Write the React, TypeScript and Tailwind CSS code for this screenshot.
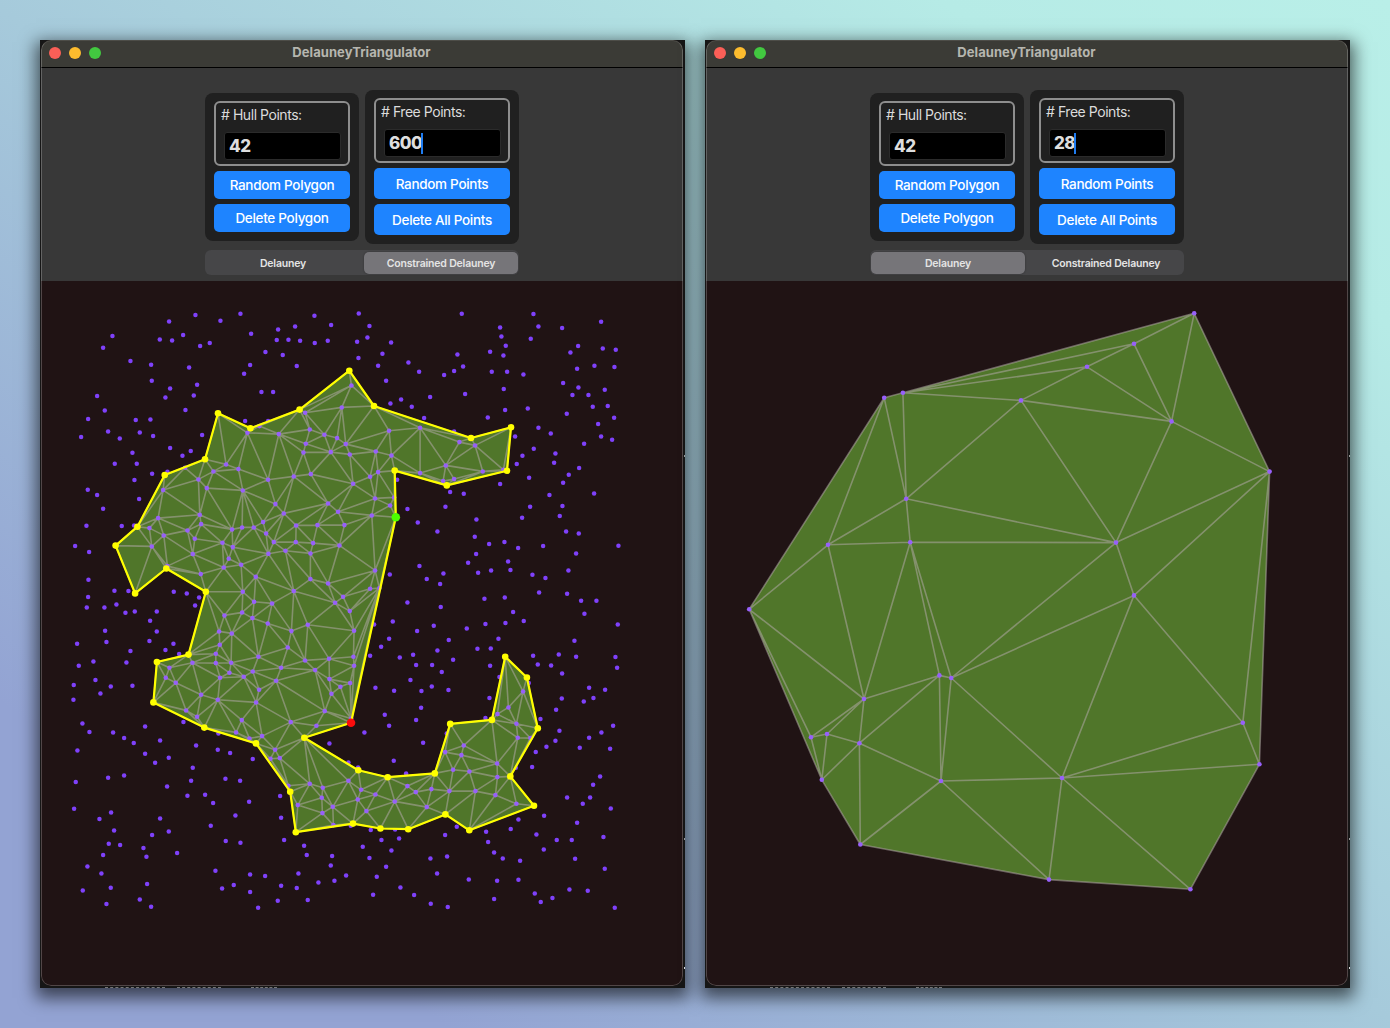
import React from "react";

type Pt = [number, number];

/* Point sets are stored per region: origin in window pixels, offsets in thirds of a pixel. */
const REGIONS: { x: number; y: number; pts: string }[] = [
  {
    x: 60,
    y: 300,
    pts: "406,45 327,64 481,62 541,41 157,108 129,143 299,118 336,121 369,105 449,129 420,138 211,183 273,194 387,202 552,221 275,242 411,254 330,265 316,292 401,286 111,288 134,331 376,330 84,357 227,360 271,358 63,411 144,394 179,415 239,397 279,408 426,405 330,444 392,453 367,467 217,458 164,491 230,491 276,521 322,515 223,540 83,569 111,585 237,597 555,363 562,398 498,493 535,507 460,514 415,538 309,570 440,564 548,571 375,503",
  },
  {
    x: 250,
    y: 300,
    pts: "3,101 0,195 193,47 326,40 135,79 243,75 358,78 84,88 80,120 115,119 150,122 194,129 233,122 321,125 352,112 423,127 46,156 98,165 140,198 325,174 397,161 384,197 475,187 507,215 408,242 540,291 453,298 421,310 485,320 522,354 34,276 69,276 54,363 28,378 441,539 304,256 275,322 165,338 179,388 86,402 223,404 261,414 287,432 167,431 160,457 242,456 299,463 377,454 417,392 510,383 424,466 384,516 360,530 510,519 182,522 131,529 54,539 309,551 375,595 432,592",
  },
  {
    x: 440,
    y: 300,
    pts: "65,41 280,42 180,82 295,79 366,84 483,65 184,109 272,116 197,137 414,138 150,155 190,166 391,157 488,145 527,149 52,163 69,199 42,213 12,225 155,215 201,215 250,223 411,206 463,197 523,201 369,249 415,262 494,269 191,267 75,282 397,285 445,285 195,330 263,325 458,320 503,318 380,341 522,353 143,352 474,372 295,383 332,400 225,409 483,409 516,419 432,431 281,446 346,460 247,467 230,492 342,488 417,504 386,524 267,533 369,548 180,552 30,576 71,581 328,585 462,580 42,394 58,426 105,436 17,496 128,514 42,537 9,543 190,509",
  },
  {
    x: 60,
    y: 500,
    pts: "129,26 79,77 185,78 222,76 45,138 87,156 85,239 163,272 205,273 84,291 169,313 80,322 133,322 196,338 224,334 290,334 270,362 290,394 135,392 268,423 139,426 51,431 340,431 316,450 357,462 211,453 100,484 56,497 199,487 106,540 41,555 152,559 217,557 121,580 40,599 341,275 380,280 417,292 405,316 294,54 268,84 311,106 275,139 419,44 423,72 382,91 404,116 398,162 322,198 422,222 516,88 546,82 487,128 518,141 506,176 491,202 543,194 548,275 493,346 546,337 477,394 515,400 479,434 467,461 467,489 397,488 513,488 508,518 480,533 551,530 328,503 317,533 347,548 423,584 473,599",
  },
  {
    x: 250,
    y: 500,
    pts: "76,12 234,10 264,35 101,40 39,66 11,82 138,76 202,75 283,75 365,46 420,16 48,100 71,126 137,126 189,129 268,136 106,152 55,161 181,160 17,230 375,211 181,237 234,250 131,273 360,266 388,264 279,290 255,308 299,333 12,305 66,310 7,354 53,370 173,374 124,393 312,392 113,442 25,470 165,481 237,476 310,470 312,497 93,503 195,510 8,514 78,542 238,537 300,549 271,560 27,569 244,581 472,27 503,67 562,94 419,223 508,198 530,237 472,307 428,364 551,377 501,393 417,416 393,440 360,467 562,451 449,472 489,464 498,495 546,495 481,540 376,563 432,572 514,573 545,559 372,373",
  },
  {
    x: 440,
    y: 500,
    pts: "16,20 270,20 367,18 359,48 246,53 109,58 378,94 416,100 104,110 193,126 147,132 234,144 309,138 535,137 108,162 408,160 84,188 204,184 153,211 211,210 114,218 385,211 10,220 0,252 277,224 316,234 297,277 381,281 133,296 194,292 423,302 469,302 2,321 219,336 433,341 251,363 196,369 136,372 80,385 533,373 26,420 403,422 175,416 112,446 152,445 279,467 356,463 408,470 526,471 39,479 293,493 333,496 531,503 366,520 5,516 150,497 178,531 266,549 447,563 495,569 25,570 148,594 365,595 460,594 249,574",
  },
  {
    x: 60,
    y: 700,
    pts: "378,31 411,50 545,60 528,97 568,115 67,70 88,96 159,97 192,114 221,129 255,79 300,121 370,66 255,161 285,188 326,173 408,136 473,149 510,159 52,151 398,203 393,242 496,236 540,242 192,226 144,233 47,246 321,259 382,287 435,284 459,309 567,305 42,326 153,337 118,357 300,355 526,346 452,377 162,391 326,394 276,405 497,423 541,428 146,431 180,435 250,444 351,459 129,465 259,470 82,499 124,520 466,512 261,552 152,563 68,571 486,565 521,555 239,598 139,612 273,620 475,100",
  },
  {
    x: 250,
    y: 700,
    pts: "18,7 224,33 122,66 199,77 36,108 75,149 89,174 61,176 179,251 218,263 215,293 143,315 217,339 248,320 295,242 333,269 323,298 376,283 349,333 434,304 472,258 497,276 544,267 530,321 250,375 115,257 303,55 8,177 404,44 417,77 498,60 513,23 343,97 519,128 238,130 431,182 468,220 295,187 324,202 90,288 93,353 102,420 162,437 170,465 246,468 242,496 145,520 45,528 93,557 140,564 205,547 253,542 288,526 83,602 173,600 24,623 0,523 0,576 338,440 358,474 362,390 394,420 447,415 424,451 408,500 380,530 369,584 451,562 492,585 541,475 561,520 542,611 302,377 435,388",
  },
  {
    x: 440,
    y: 700,
    pts: "205,22 172,42 229,71 233,113 271,114 71,136 64,165 15,156 171,190 39,209 88,214 172,231 28,273 106,273 166,285 229,311 431,4 348,29 136,54 301,57 358,92 346,122 319,140 287,156 276,201 447,113 484,97 519,77 419,143 510,146 227,203 480,229 459,254 381,292 450,292 428,311 512,325 312,347 411,368 235,358 212,387 50,380 138,395 15,405 289,403 144,426 350,420 395,420 490,411 162,457 311,448 188,475 21,469 240,482 405,476 494,506 86,538 171,542 235,539 284,580 388,568 443,572 302,606 337,594 162,597 23,621 524,623 20,100",
  },
];

const FREE_POINTS: Pt[] = REGIONS.flatMap((r) =>
  r.pts.split(" ").map((s): Pt => {
    const [x, y] = s.split(",").map(Number);
    return [r.x + x / 3 + 0.1, r.y + y / 3 + 0.1];
  }),
);

const POLYGON: Pt[] = [
  [349.3, 370.7], [374, 406], [471, 438], [511, 427.3], [507, 470.7], [446.8, 485.4], [394.7, 470.6],
  [395.8, 517.2], [351, 722.7], [304.3, 737.8], [358.3, 770.2], [387.7, 777.2], [434.8, 773.4],
  [450.2, 723.9], [491.9, 719.9], [505.2, 656.7], [526.9, 677.5], [537.8, 728.2], [510.3, 776.4],
  [534, 805.7], [469.3, 830.3], [445.4, 814.4], [408.2, 829.2], [380.4, 828.5], [353, 823.6],
  [295.8, 832.2], [290.2, 791.7], [256, 743.4], [204.3, 727.6], [153.4, 702.4], [156.9, 662],
  [188.5, 654.6], [205.8, 591.8], [166.3, 568.5], [135.1, 593.4], [115.6, 545.6], [137.4, 526.7],
  [164.7, 475], [205, 459.2], [218, 413.3], [250.4, 428.3], [299.6, 409.6],
];

const HULL: Pt[] = [
  [1194.2, 313.3], [1269.6, 471.6], [1259.4, 764.3], [1190.4, 889.3], [1049, 879.6], [860.3, 844.5],
  [821.8, 779.8], [749.2, 609.3], [884.2, 397.8], [902.9, 392.8],
];

const HULL_INNER: Pt[] = [
  [1134, 343.8], [1087, 366.8], [1021, 400.4], [1171.6, 421.4], [906.2, 498.8], [910.2, 542.2],
  [828, 544.8], [1116, 542.6], [1134, 595.4], [939.4, 675.4], [951.2, 678], [864, 699], [1242.8, 722.8],
  [811, 737.2], [827, 734], [859.4, 743.2], [941, 781], [1062, 778],
];

function cross(a: Pt, b: Pt, c: Pt) {
  return (b[0] - a[0]) * (c[1] - a[1]) - (b[1] - a[1]) * (c[0] - a[0]);
}

function inside(p: Pt, poly: Pt[]) {
  let hit = false;
  for (let i = 0, j = poly.length - 1; i < poly.length; j = i++) {
    const [xi, yi] = poly[i];
    const [xj, yj] = poly[j];
    if (yi > p[1] !== yj > p[1] && p[0] < ((xj - xi) * (p[1] - yi)) / (yj - yi) + xi) hit = !hit;
  }
  return hit;
}

/* Constrained Delaunay triangulation of a clockwise polygon, grown edge by edge from its border. */
function triangulate(poly: Pt[], inner: Pt[]): [Pt, Pt][] {
  const pts = [...poly, ...inner];
  const n = poly.length;
  const blocked = (a: number, b: number) => {
    for (let i = 0; i < n; i++) {
      const j = (i + 1) % n;
      if (i === a || i === b || j === a || j === b) continue;
      if (
        cross(pts[a], pts[b], pts[i]) * cross(pts[a], pts[b], pts[j]) < 0 &&
        cross(pts[i], pts[j], pts[a]) * cross(pts[i], pts[j], pts[b]) < 0
      )
        return true;
    }
    return false;
  };
  const key = (a: number, b: number) => a * 1000 + b;
  const done = new Set<number>();
  const edges = new Map<number, [Pt, Pt]>();
  const border = new Set<number>();
  const queue: [number, number][] = [];
  for (let i = 0; i < n; i++) {
    queue.push([i, (i + 1) % n]);
    border.add(key(i, (i + 1) % n));
  }
  while (queue.length && done.size < 4000) {
    const [a, b] = queue.shift()!;
    if (done.has(key(a, b))) continue;
    let best = -1;
    let bestCos = 2;
    for (let c = 0; c < pts.length; c++) {
      if (c === a || c === b || cross(pts[a], pts[b], pts[c]) <= 1e-6) continue;
      const ux = pts[a][0] - pts[c][0];
      const uy = pts[a][1] - pts[c][1];
      const vx = pts[b][0] - pts[c][0];
      const vy = pts[b][1] - pts[c][1];
      const cos = (ux * vx + uy * vy) / (Math.hypot(ux, uy) * Math.hypot(vx, vy));
      if (cos < bestCos) {
        const mid: Pt = [(pts[a][0] + pts[b][0] + pts[c][0]) / 3, (pts[a][1] + pts[b][1] + pts[c][1]) / 3];
        if (!inside(mid, poly) || blocked(a, c) || blocked(b, c)) continue;
        best = c;
        bestCos = cos;
      }
    }
    done.add(key(a, b));
    if (best < 0) continue;
    const c = best;
    done.add(key(b, c));
    done.add(key(c, a));
    for (const [p, q] of [[a, b], [b, c], [c, a]] as [number, number][]) {
      edges.set(key(Math.min(p, q), Math.max(p, q)), [pts[p], pts[q]]);
    }
    if (!border.has(key(b, c)) && !done.has(key(c, b))) queue.push([c, b]);
    if (!border.has(key(c, a)) && !done.has(key(a, c))) queue.push([a, c]);
  }
  return [...edges.values()];
}

const toPath = (edges: [Pt, Pt][]) =>
  edges.map(([a, b]) => `M${a[0].toFixed(1)} ${a[1].toFixed(1)}L${b[0].toFixed(1)} ${b[1].toFixed(1)}`).join("");
const toPoints = (pts: Pt[]) => pts.map((p) => p.join(",")).join(" ");

const INNER = FREE_POINTS.filter((p) => inside(p, POLYGON));
const OUTER = FREE_POINTS.filter((p) => !inside(p, POLYGON));
const MESH = toPath(triangulate(POLYGON, INNER));
const HULL_MESH = toPath(triangulate(HULL, HULL_INNER));

function ConstrainedCanvas() {
  return (
    <svg className="block" width={642} height={705} viewBox="41 281 642 705">
      {OUTER.map(([x, y], i) => (
        <circle key={i} cx={x} cy={y} r={2.25} fill="#7f41fb" />
      ))}
      <polygon points={toPoints(POLYGON)} fill="#50762a" />
      <path d={MESH} stroke="#b4aaaa" strokeOpacity={0.52} strokeWidth={1.6} fill="none" />
      {INNER.map(([x, y], i) => (
        <circle key={i} cx={x} cy={y} r={2.3} fill="#9760fa" />
      ))}
      <polygon points={toPoints(POLYGON)} fill="none" stroke="#ffff00" strokeWidth={2.2} strokeLinejoin="round" />
      {POLYGON.map(([x, y], i) => (
        <circle
          key={i}
          cx={x}
          cy={y}
          r={i === 7 || i === 8 ? 4.3 : 3.3}
          fill={i === 7 ? "#4cff00" : i === 8 ? "#fb0d0d" : "#ffff00"}
        />
      ))}
    </svg>
  );
}

function DelauneyCanvas() {
  return (
    <svg className="block" width={642} height={705} viewBox="706 281 642 705">
      <polygon points={toPoints(HULL)} fill="#50762a" />
      <path d={HULL_MESH} stroke="#b4aaaa" strokeOpacity={0.52} strokeWidth={1.6} fill="none" />
      {[...HULL, ...HULL_INNER].map(([x, y], i) => (
        <circle key={i} cx={x} cy={y} r={2.3} fill="#9760fa" />
      ))}
    </svg>
  );
}

function NumberBox({ label, value, caret }: { label: string; value: string; caret?: boolean }) {
  return (
    <div className="h-[65px] w-[136px] rounded-[6px] border-2 border-[#8e8e8e] pl-[5px] pt-[2px]">
      <div className="h-[20px] whitespace-nowrap text-[14px] leading-[20px] tracking-[-0.45px] text-[#dcdcdc]">{label}</div>
      <div className="ml-[3px] mt-[7px] flex h-[28px] w-[117px] items-center rounded-[3px] border border-[#2b2b2b] bg-black pl-[4px]">
        <span className="text-[17px] font-extrabold leading-none tracking-[-0.5px] text-[#dedede]">{value}</span>
        {caret && <span className="-ml-px h-[21px] w-[2px] bg-[#1f7cf0]" />}
      </div>
    </div>
  );
}

function BlueButton({ children, tall }: { children: string; tall?: boolean }) {
  return (
    <button
      className={
        "flex w-[136px] items-center justify-center whitespace-nowrap rounded-[5px] bg-[#1e84ff] text-[13.5px] font-medium tracking-[-0.3px] text-white " +
        (tall ? "h-[31px] pt-[2px]" : "h-[28px] pt-px")
      }
    >
      {children}
    </button>
  );
}

function Segment({ label, active }: { label: string; active: boolean }) {
  return (
    <div
      className={
        "flex h-[22px] flex-1 items-center justify-center rounded-[5px] pt-[2px] text-[10.5px] font-semibold tracking-[-0.18px] text-[#e4e4e4] " +
        (active ? "bg-[#767579] shadow-[0_0_2px_rgba(0,0,0,0.35)]" : "")
      }
    >
      {label}
    </div>
  );
}

function AppWindow({ free, constrained, children }: { free: string; constrained: boolean; children: React.ReactNode }) {
  return (
    <div className="relative h-[948px] w-[645px] bg-[#161616] pb-[2px] pl-px pr-[2px] shadow-[0_6px_16px_4px_rgba(0,0,0,0.6)]">
      <div className="relative flex h-[946px] w-[642px] flex-col overflow-hidden rounded-[10px] bg-[#201314]">
        <div className="relative flex h-[28px] items-center border-b border-black bg-[#3b3b36] pl-[8px]">
          <div className="flex gap-[8px] pb-px">
            <span className="size-[12px] rounded-full bg-[#fb5f57]" />
            <span className="size-[12px] rounded-full bg-[#fdbc2e]" />
            <span className="size-[12px] rounded-full bg-[#42c840]" />
          </div>
          <div className="absolute inset-x-0 top-[4px] pr-px text-center text-[13px] font-bold leading-[17px] tracking-[0.06px] text-[#b6b6af]">
            DelauneyTriangulator
          </div>
        </div>
        <div className="flex h-[213px] flex-col items-center bg-[#383838] pt-[22px]">
          <div className="flex h-[154px] items-center gap-[6px]">
            <div className="flex h-[148px] w-[154px] flex-col items-center gap-[5px] rounded-[8px] bg-[#202020] pt-[8px]">
              <NumberBox label="# Hull Points:" value="42" />
              <BlueButton>Random Polygon</BlueButton>
              <BlueButton>Delete Polygon</BlueButton>
            </div>
            <div className="flex h-[154px] w-[154px] flex-col items-center gap-[5px] rounded-[8px] bg-[#202020] pt-[8px]">
              <NumberBox label="# Free Points:" value={free} caret />
              <BlueButton tall>Random Points</BlueButton>
              <BlueButton tall>Delete All Points</BlueButton>
            </div>
          </div>
          <div className="mt-[6px] flex h-[25px] w-[314px] items-center gap-[4px] rounded-[6px] bg-[#464648] px-px">
            <Segment label="Delauney" active={!constrained} />
            <Segment label="Constrained Delauney" active={constrained} />
          </div>
        </div>
        {children}
        <div className="pointer-events-none absolute inset-0 rounded-[10px] border border-[#ffffff38] border-t-[#ffffff18]" />
      </div>
      {/* Tops of the editor text that shows below the window */}
      <div className="absolute bottom-0 left-[65px] flex h-px gap-[12px]">
        <span className="w-[60px] border-t border-dashed border-[#777]" />
        <span className="w-[44px] border-t border-dashed border-[#777]" />
        <span className="ml-[18px] w-[26px] border-t border-dashed border-[#777]" />
      </div>
      <span className="absolute right-0 top-[415px] h-[2px] w-px bg-[#999]" />
      <span className="absolute right-0 top-[798px] h-[2px] w-px bg-[#999]" />
      <span className="absolute right-0 top-[927px] h-[2px] w-px bg-[#ddd]" />
    </div>
  );
}

export default function App() {
  return (
    <div className="flex h-[1028px] w-[1390px] gap-[20px] overflow-hidden bg-[linear-gradient(216deg,#b9efe8_0%,#b6ebe6_16%,#a6cadb_50%,#93a3d3_84%)] p-[40px] font-['Inter',sans-serif]">
      <AppWindow free="600" constrained>
        <ConstrainedCanvas />
      </AppWindow>
      <AppWindow free="28" constrained={false}>
        <DelauneyCanvas />
      </AppWindow>
    </div>
  );
}
